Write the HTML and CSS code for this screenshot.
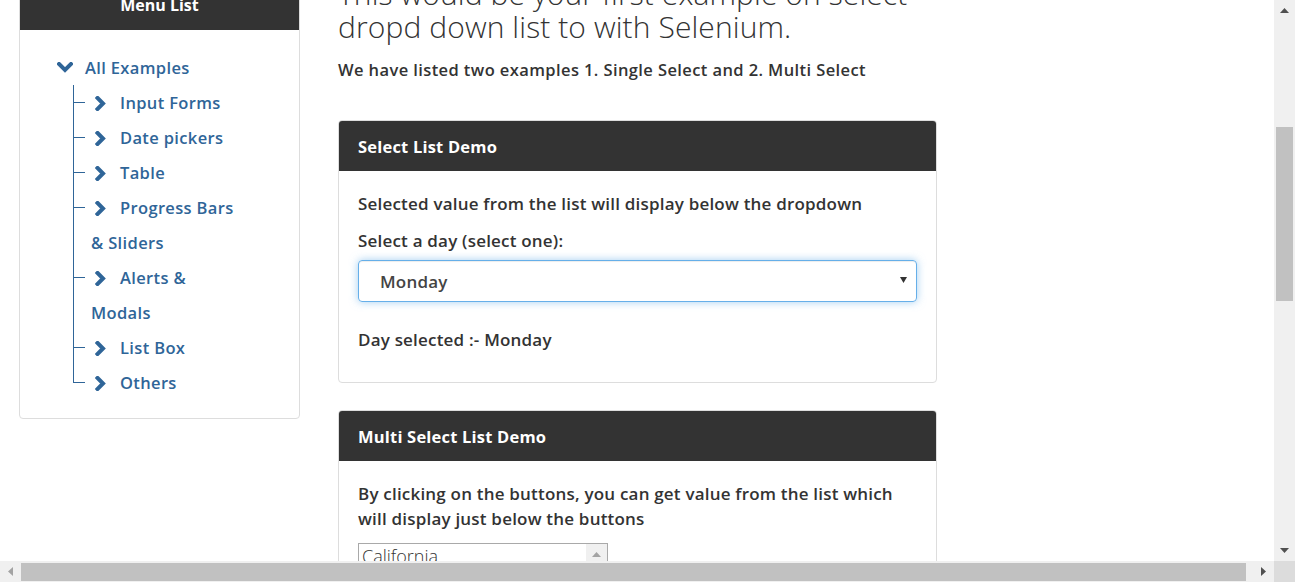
FILE: index.html
```html
<!DOCTYPE html>
<html lang="en">
<head>
<meta charset="utf-8">
<title>Select Dropdown List</title>
<link rel="stylesheet" href="styles.css">
</head>
<body>
<div class="viewport">
  <div class="page">
    <aside class="sidebar">
      <div class="sidebar-head">Menu List</div>
      <div class="sidebar-body">
        <ul class="tree">
          <li class="tree-root">
            <span class="row">
              <svg class="chev-down" width="16" height="11" viewBox="0 0 16 11"><path d="M2 2 L8 8 L14 2" fill="none" stroke="#2f6598" stroke-width="4" stroke-linecap="square"/></svg>
              <span class="root-label">All Examples</span>
            </span>
            <ul class="sub">
              <li><svg class="chev" width="11" height="15" viewBox="0 0 11 15"><path d="M2.5 2 L8 7.5 L2.5 13" fill="none" stroke="#2f6598" stroke-width="4" stroke-linecap="square"/></svg>Input Forms</li>
              <li><svg class="chev" width="11" height="15" viewBox="0 0 11 15"><path d="M2.5 2 L8 7.5 L2.5 13" fill="none" stroke="#2f6598" stroke-width="4" stroke-linecap="square"/></svg>Date pickers</li>
              <li><svg class="chev" width="11" height="15" viewBox="0 0 11 15"><path d="M2.5 2 L8 7.5 L2.5 13" fill="none" stroke="#2f6598" stroke-width="4" stroke-linecap="square"/></svg>Table</li>
              <li><svg class="chev" width="11" height="15" viewBox="0 0 11 15"><path d="M2.5 2 L8 7.5 L2.5 13" fill="none" stroke="#2f6598" stroke-width="4" stroke-linecap="square"/></svg>Progress Bars<br>&amp; Sliders</li>
              <li><svg class="chev" width="11" height="15" viewBox="0 0 11 15"><path d="M2.5 2 L8 7.5 L2.5 13" fill="none" stroke="#2f6598" stroke-width="4" stroke-linecap="square"/></svg>Alerts &amp;<br>Modals</li>
              <li><svg class="chev" width="11" height="15" viewBox="0 0 11 15"><path d="M2.5 2 L8 7.5 L2.5 13" fill="none" stroke="#2f6598" stroke-width="4" stroke-linecap="square"/></svg>List Box</li>
              <li><svg class="chev" width="11" height="15" viewBox="0 0 11 15"><path d="M2.5 2 L8 7.5 L2.5 13" fill="none" stroke="#2f6598" stroke-width="4" stroke-linecap="square"/></svg>Others</li>
            </ul>
          </li>
        </ul>
      </div>
    </aside>

    <main class="main">
      <h2 class="title">This would be your first example on select dropd down list to with Selenium.</h2>
      <p class="intro">We have listed two examples 1. Single Select and 2. Multi Select</p>

      <section class="panel">
        <div class="panel-head">Select List Demo</div>
        <div class="panel-body">
          <p class="text">Selected value from the list will display below the dropdown</p>
          <p class="label">Select a day (select one):</p>
          <div class="select">
            <span>Monday</span>
            <svg width="7" height="6" viewBox="0 0 7 6"><path d="M0 0 H7 L3.5 6 Z" fill="#333"/></svg>
          </div>
          <p class="result">Day selected :- Monday</p>
        </div>
      </section>

      <section class="panel panel-multi">
        <div class="panel-head">Multi Select List Demo</div>
        <div class="panel-body">
          <p class="text">By clicking on the buttons, you can get value from the list which will display just below the buttons</p>
          <div class="listbox">
            <span class="opt">California</span>
            <span class="lb-scroll"><svg width="9" height="5" viewBox="0 0 9 5"><path d="M0 5 L4.5 0 L9 5 Z" fill="#a3a3a3"/></svg></span>
          </div>
        </div>
      </section>
    </main>
  </div>
</div>

<div class="vbar">
  <span class="vbtn"><svg width="9" height="5" viewBox="0 0 9 5"><path d="M0 5 L4.5 0 L9 5 Z" fill="#505050"/></svg></span>
  <span class="vtrack"><span class="vthumb"></span></span>
  <span class="vbtn"><svg width="9" height="5" viewBox="0 0 9 5"><path d="M0 0 L9 0 L4.5 5 Z" fill="#505050"/></svg></span>
</div>
<div class="hbar">
  <span class="hbtn"><svg width="5" height="9" viewBox="0 0 5 9"><path d="M5 0 L5 9 L0 4.5 Z" fill="#a3a3a3"/></svg></span>
  <span class="htrack"><span class="hthumb"></span></span>
  <span class="hbtn"><svg width="5" height="9" viewBox="0 0 5 9"><path d="M0 0 L0 9 L5 4.5 Z" fill="#505050"/></svg></span>
</div>
<div class="corner"></div>
</body>
</html>
```

FILE: styles.css
```css
* { box-sizing: border-box; }

html, body { height: 100%; }

body {
  margin: 0;
  overflow: hidden;
  display: grid;
  grid-template-columns: 1274px 21px;
  grid-template-rows: 561px 21px;
  background: #fff;
  font-family: "Open Sans", "Lato", sans-serif;
  color: #333;
}

.viewport {
  overflow: hidden;
  background: #fff;
}

.page {
  display: flex;
  align-items: flex-start;
  gap: 38px;
  padding-left: 19px;
  margin-top: -21px;
  width: 1400px;
}

/* Sidebar */
.sidebar {
  width: 281px;
  flex: none;
  border: 1px solid #ddd;
  border-radius: 4px;
  overflow: hidden;
}

.sidebar-head {
  height: 50px;
  background: #333;
  color: #fff;
  font-weight: 700;
  font-size: 16px;
  display: flex;
  align-items: center;
  justify-content: center;
}

.sidebar-body {
  padding: 20px 0 18px 36px;
}

.tree, .sub {
  list-style: none;
  margin: 0;
  padding: 0;
}

.tree {
  color: #2f6598;
  font-size: 16.5px;
  font-weight: 600;
  line-height: 35px;
  letter-spacing: 0.35px;
}

.row {
  display: flex;
  align-items: center;
}

.chev-down {
  margin-left: 1px;
  margin-right: 12px;
}

.sub {
  position: relative;
  margin-left: 17px;
}

.sub::before {
  content: "";
  position: absolute;
  left: 0;
  top: 0;
  bottom: 17px;
  border-left: 1px solid #2f6598;
}

.sub li {
  position: relative;
  padding-left: 18px;
}

.sub li::before {
  content: "";
  position: absolute;
  left: 0;
  top: 17px;
  width: 12px;
  border-top: 1px solid #2f6598;
}

.chev {
  vertical-align: -2px;
  margin-left: 4px;
  margin-right: 14px;
}

/* Main */
.main {
  width: 599px;
  flex: none;
}

.title {
  margin: -2px 0 0;
  font-size: 30px;
  font-weight: 300;
  line-height: 33px;
  letter-spacing: 0.1px;
  color: #333;
}

.intro {
  margin: 15px 0 0;
  font-size: 16.5px;
  font-weight: 600;
  line-height: 24px;
  letter-spacing: 0.4px;
}

.panel {
  margin-top: 38px;
  border: 1px solid #ddd;
  border-radius: 4px;
  overflow: hidden;
}

.panel-multi {
  margin-top: 27px;
}

.panel-head {
  height: 50px;
  background: #333;
  color: #fff;
  font-size: 16.5px;
  font-weight: 700;
  letter-spacing: 0.2px;
  padding-left: 19px;
  display: flex;
  align-items: center;
}

.panel-body {
  padding: 20px 19px 30px;
  font-size: 17px;
  font-weight: 600;
  line-height: 25px;
  letter-spacing: 0.2px;
}

.panel-body p {
  margin: 0;
}

.label {
  margin-top: 12px !important;
}

.select {
  margin-top: 7px;
  height: 42px;
  border: 1px solid #66afe9;
  border-radius: 4px;
  box-shadow: inset 0 1px 1px rgba(0,0,0,.075), 0 0 8px rgba(102,175,233,.6);
  display: flex;
  align-items: center;
  justify-content: space-between;
  padding: 0 9px 0 21px;
  color: #444;
}

.select svg {
  margin-top: -2px;
}

.result {
  margin-top: 25px !important;
}

.listbox {
  margin-top: 12px;
  width: 250px;
  height: 60px;
  border: 1px solid #a9a9a9;
  display: flex;
  justify-content: space-between;
}

.opt {
  padding-left: 3px;
  font-weight: 300;
  font-size: 18px;
  line-height: 24px;
  letter-spacing: 0;
  color: #333;
}

.lb-scroll {
  width: 21px;
  background: #f0f0f0;
  display: flex;
  justify-content: center;
  padding-top: 8px;
}

/* Scrollbars */
.vbar {
  background: #f0f0f0;
  display: flex;
  flex-direction: column;
}

.vbtn {
  height: 21px;
  display: flex;
  align-items: center;
  justify-content: center;
  flex: none;
}

.vtrack {
  flex: 1;
  padding: 106px 2px 0 2px;
}

.vthumb {
  display: block;
  height: 174px;
  background: #c1c1c1;
}

.hbar {
  background: #f0f0f0;
  display: flex;
}

.hbtn {
  width: 21px;
  display: flex;
  align-items: center;
  justify-content: center;
  flex: none;
}

.htrack {
  flex: 1;
  padding: 2px 0 1px;
}

.hthumb {
  display: block;
  height: 100%;
  width: 1225px;
  background: #c1c1c1;
}

.corner {
  background: #dcdcdc;
}
```
